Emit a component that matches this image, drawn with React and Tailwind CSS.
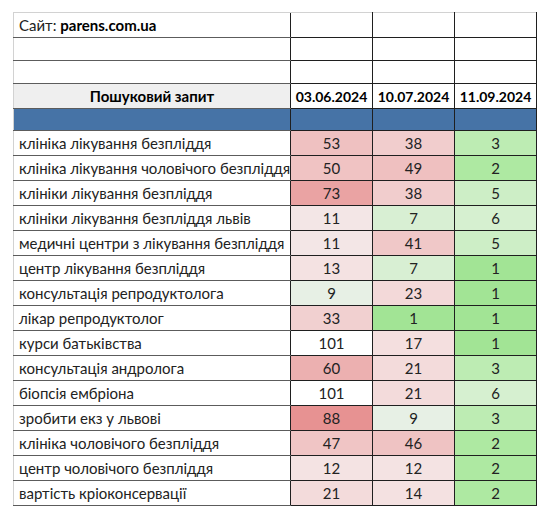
import React from 'react'

const rows = [
  ['клініка лікування безпліддя', [53, 'bg-[#efc1c1]'], [38, 'bg-[#f1cdcd]'], [3, 'bg-[#bdecb3]']],
  ['клініка лікування чоловічого безпліддя', [50, 'bg-[#f0c3c3]'], [49, 'bg-[#efc0c0]'], [2, 'bg-[#aee9a2]']],
  ['клініки лікування безпліддя', [73, 'bg-[#eaa3a3]'], [38, 'bg-[#f1cdcd]'], [5, 'bg-[#cdeec6]']],
  ['клініки лікування безпліддя львів', [11, 'bg-[#f3e6e6]'], [7, 'bg-[#d8efd3]'], [6, 'bg-[#d6f0d0]']],
  ['медичні центри з лікування безпліддя', [11, 'bg-[#f3e6e6]'], [41, 'bg-[#f0c8c8]'], [5, 'bg-[#cdeec6]']],
  ['центр лікування безпліддя', [13, 'bg-[#f4e2e2]'], [7, 'bg-[#d8efd3]'], [1, 'bg-[#a2e495]']],
  ['консультація репродуктолога', [9, 'bg-[#e7f0e5]'], [23, 'bg-[#f3d9d9]'], [1, 'bg-[#a2e495]']],
  ['лікар репродуктолог', [33, 'bg-[#f1d0d0]'], [1, 'bg-[#a2e495]'], [1, 'bg-[#a2e495]']],
  ['курси батьківства', [101, 'bg-white'], [17, 'bg-[#f4dfdf]'], [1, 'bg-[#a2e495]']],
  ['консультація андролога', [60, 'bg-[#ecb0b0]'], [21, 'bg-[#f3dbdb]'], [3, 'bg-[#bdecb3]']],
  ['біопсія ембріона', [101, 'bg-white'], [21, 'bg-[#f3dbdb]'], [6, 'bg-[#d6f0d0]']],
  ['зробити екз у львові', [88, 'bg-[#e79292]'], [9, 'bg-[#e7f0e5]'], [3, 'bg-[#bdecb3]']],
  ['клініка чоловічого безпліддя', [47, 'bg-[#f0c5c5]'], [46, 'bg-[#efc3c3]'], [2, 'bg-[#aee9a2]']],
  ['центр чоловічого безпліддя', [12, 'bg-[#f4e3e3]'], [12, 'bg-[#f4e3e3]'], [2, 'bg-[#aee9a2]']],
  ['вартість кріоконсервації', [21, 'bg-[#f3dbdb]'], [14, 'bg-[#f4e1e1]'], [2, 'bg-[#aee9a2]']],
]

const first = 'border-y border-l border-y-[#5c5c5c] border-l-[#d2d2d2] pl-[5px] text-left'
const num = 'border border-[#1f1f1f] text-center'

export default function App() {
  return (
    <div className="bg-white min-h-[518px] pl-[13px] pt-[12px] font-['Lato',sans-serif] text-[15px] text-[#222]">
      <table className="border-collapse table-fixed w-[523px]">
        <colgroup>
          <col className="w-[277px]" />
          <col className="w-[82px]" />
          <col className="w-[82px]" />
          <col className="w-[82px]" />
        </colgroup>
        <tbody>
          <tr className="h-[25px]">
            <td className={first + ' border-t-[#d2d2d2]'}>
              Сайт: <b className="font-bold text-black">parens.com.ua</b>
            </td>
            <td className={num + ' border-t-[#d2d2d2]'}></td>
            <td className={num + ' border-t-[#d2d2d2]'}></td>
            <td className={num + ' border-t-[#d2d2d2]'}></td>
          </tr>
          <tr className="h-[23px]">
            <td className={first}></td>
            <td className={num}></td>
            <td className={num}></td>
            <td className={num}></td>
          </tr>
          <tr className="h-[23px]">
            <td className={first}></td>
            <td className={num}></td>
            <td className={num}></td>
            <td className={num}></td>
          </tr>
          <tr className="h-[25px] font-bold text-black">
            <td className="border-y border-l border-y-[#5c5c5c] border-l-[#d2d2d2] bg-[#efefef] text-center">
              Пошуковий запит
            </td>
            <td className={num + ' text-[14px]'}>03.06.2024</td>
            <td className={num + ' text-[14px]'}>10.07.2024</td>
            <td className={num + ' text-[14px]'}>11.09.2024</td>
          </tr>
          <tr className="h-[22px] bg-[#4673a6]">
            <td className="border-y border-l border-y-[#5c5c5c] border-l-[#d2d2d2]"></td>
            <td className={num}></td>
            <td className={num}></td>
            <td className={num}></td>
          </tr>
          {rows.map(([q, a, b, c]) => (
            <tr key={q} className="h-[25px]">
              <td className={first + ' whitespace-nowrap overflow-hidden'}>{q}</td>
              <td className={num + ' ' + a[1]}>{a[0]}</td>
              <td className={num + ' ' + b[1]}>{b[0]}</td>
              <td className={num + ' ' + c[1]}>{c[0]}</td>
            </tr>
          ))}
        </tbody>
      </table>
    </div>
  )
}
